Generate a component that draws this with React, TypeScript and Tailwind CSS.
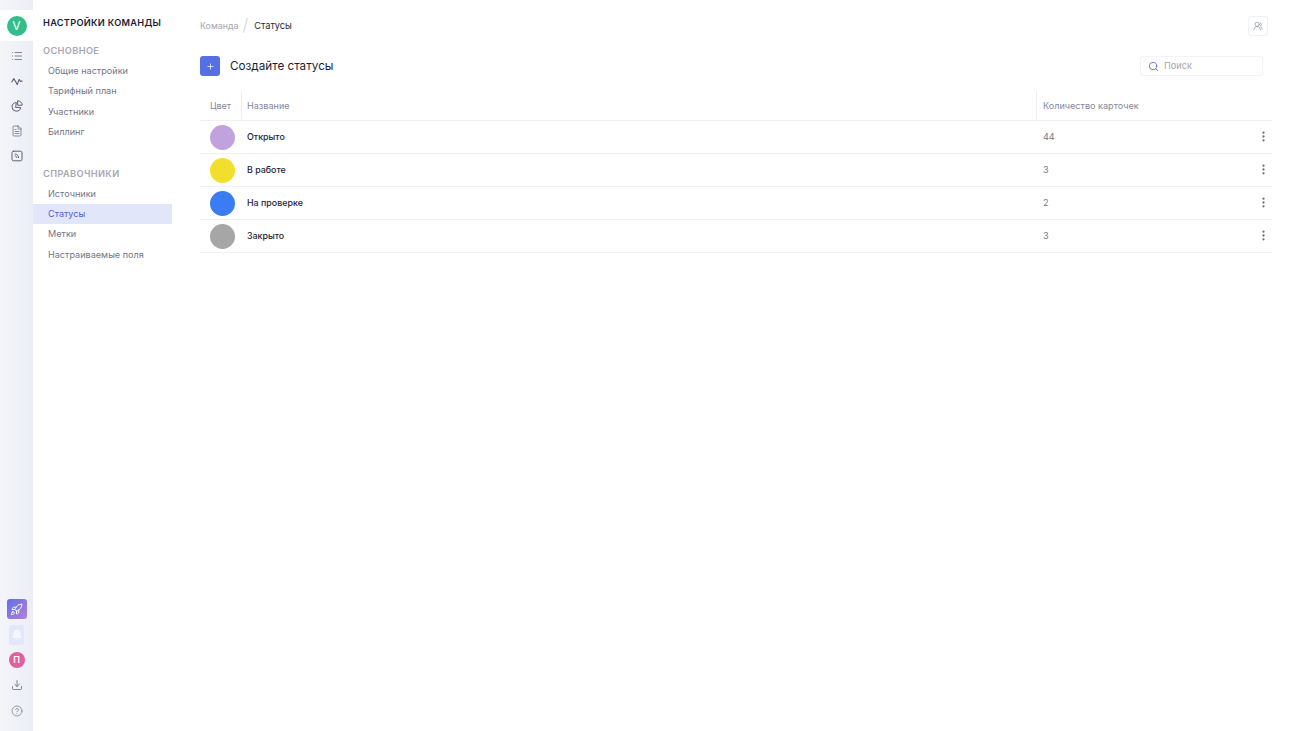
import { Plus, Search, MoreVertical, List, Rocket, Bell, Download, HelpCircle, FileText, UsersRound } from 'lucide-react'

const font = { fontFamily: 'Inter, "Noto Sans", sans-serif' }

const mainLinks = ['Общие настройки', 'Тарифный план', 'Участники', 'Биллинг']
const refLinks = ['Источники', 'Статусы', 'Метки', 'Настраиваемые поля']

const statuses = [
  { name: 'Открыто', color: 'bg-[#c0a3dc]', count: 44 },
  { name: 'В работе', color: 'bg-[#f2df2d]', count: 3 },
  { name: 'На проверке', color: 'bg-[#3b7cf2]', count: 2 },
  { name: 'Закрыто', color: 'bg-[#a6a6a6]', count: 3 },
]

function WaveIcon() {
  return (
    <svg width="12" height="12" viewBox="0 0 12 12" fill="none" stroke="currentColor" strokeWidth="1.1" strokeLinecap="round" strokeLinejoin="round">
      <path d="M0.8 7 L2.8 3.6 L5 7.2 L6.2 9.6 L8.2 4.4 L9.4 6.4 L11.2 6" />
    </svg>
  )
}

function PieIcon() {
  return (
    <svg width="12" height="12" viewBox="0 0 12 12" fill="none" stroke="currentColor" strokeWidth="1" strokeLinecap="round" strokeLinejoin="round">
      <path d="M5 2.6 A4.3 4.3 0 1 0 9.6 7.4 H5 Z" />
      <path d="M7 0.8 A4.2 4.2 0 0 1 11.2 5.2 H7 Z" />
    </svg>
  )
}

function BoxIcon() {
  return (
    <svg width="12" height="12" viewBox="0 0 12 12" fill="none" stroke="currentColor" strokeWidth="1" strokeLinecap="round" strokeLinejoin="round">
      <rect x="1" y="1.2" width="10" height="9.6" rx="1.6" />
      <path d="M4.2 4 C6 4 7.6 5.6 7.6 7.6" />
      <path d="M4.2 6 C5.2 6 5.8 6.8 5.8 7.6" />
    </svg>
  )
}

function Rail() {
  return (
    <div className="w-[33px] h-[731px] shrink-0 flex flex-col items-center bg-gradient-to-r from-[#f4f5f9] to-[#eceef6]">
      <div className="mt-[10px] w-full h-[31px] bg-white flex items-center justify-center">
        <div className="w-5 h-5 rounded-full bg-[#33bd8b] text-white text-[12px] flex items-center justify-center">V</div>
      </div>
      <div className="mt-[9px] flex flex-col items-center gap-[13px] text-[#5d6175]">
        <List size={12} strokeWidth={1.5} />
        <WaveIcon />
        <PieIcon />
        <FileText size={12} strokeWidth={1.4} />
        <BoxIcon />
      </div>
      <div className="mt-auto mb-[14px] flex flex-col items-center text-[#5d6175]">
        <div className="w-5 h-5 rounded-[3px] bg-gradient-to-br from-[#5d6fe8] to-[#b47fd8] flex items-center justify-center text-white">
          <Rocket size={13} strokeWidth={1.8} />
        </div>
        <div className="mt-[6px] w-[15px] h-5 rounded-[2px] bg-[#e3e7fa] flex items-center justify-center text-[#f4f5fd]">
          <Bell size={12} fill="currentColor" />
        </div>
        <div className="mt-[7px] w-4 h-4 rounded-full bg-[#e0609f] text-white text-[9px] font-semibold flex items-center justify-center">П</div>
        <Download className="mt-[11px]" size={12} strokeWidth={1.5} />
        <HelpCircle className="mt-[14px]" size={12} strokeWidth={1.2} />
      </div>
    </div>
  )
}

function NavGroup({ title, links }: { title: string; links: string[] }) {
  return (
    <div>
      <div className="pl-[10px] h-[14px] leading-[14px] text-[9.2px] font-semibold tracking-[0.38px] text-[#a5a7b3]">{title}</div>
      <div className="mt-[3px]">
        {links.map((l) => (
          <div
            key={l}
            className={`h-[20.4px] leading-[20.4px] pl-[15px] text-[9.1px] ${l === 'Статусы' ? 'bg-[#e2e6f9] text-[#4f63d2]' : 'text-[#73768a]'}`}
          >
            {l}
          </div>
        ))}
      </div>
    </div>
  )
}

function Sidebar() {
  return (
    <div className="w-[139px] shrink-0 pt-[16px]">
      <div className="pl-[10px] h-[14px] leading-[14px] text-[9.2px] font-semibold tracking-[0.3px] text-[#1b1e33]">НАСТРОЙКИ КОМАНДЫ</div>
      <div className="mt-[14px]">
        <NavGroup title="ОСНОВНОЕ" links={mainLinks} />
      </div>
      <div className="mt-[24px]">
        <NavGroup title="СПРАВОЧНИКИ" links={refLinks} />
      </div>
    </div>
  )
}

export default function App() {
  return (
    <div className="flex w-[1300px] h-[731px] overflow-hidden bg-white" style={font}>
      <Rail />
      <Sidebar />
      <div className="flex-1 pl-[28px] pr-[28px]">
        <div className="h-[20px] mt-[16px] flex items-center justify-between pr-[4px]">
          <div className="flex items-center text-[8.9px] -mt-[1px]">
            <span className="text-[#a5a7b3]">Команда</span>
            <span className="mx-[4px] text-[#c4c6cf] text-[17px] font-extralight leading-none">/</span>
            <span className="ml-[2px] text-[9.2px] text-[#26293d]">Статусы</span>
          </div>
          <div className="w-5 h-5 rounded-[3px] border border-[#f0f1f5] flex items-center justify-center text-[#777a8c]">
            <UsersRound size={10} strokeWidth={1.4} />
          </div>
        </div>

        <div className="mt-[20px] h-5 flex items-center justify-between pr-[9px]">
          <div className="flex items-center">
            <div className="w-5 h-5 rounded-[3px] bg-[#5470e4] flex items-center justify-center text-white">
              <Plus size={9} strokeWidth={2} />
            </div>
            <span className="ml-[10px] mt-[1px] text-[11.7px] text-[#1b1e33]">Создайте статусы</span>
          </div>
          <div className="w-[123px] h-5 rounded-[3px] border border-[#f2f3f8] flex items-center pl-[7px] gap-[5px] text-[9.2px] text-[#a5a7b3]">
            <Search size={11} strokeWidth={2} className="text-[#6272d8]" />
            <span>Поиск</span>
          </div>
        </div>

        <div className="mt-[15px]">
          <div className="flex h-[30px] items-stretch border-b border-[#eff0f3] text-[9.1px] text-[#85889a]">
            <div className="w-[42px] flex items-center justify-center border-r border-[#eff0f3]">Цвет</div>
            <div className="flex-1 flex items-center pl-[5px] border-r border-[#eff0f3]">Название</div>
            <div className="w-[235px] flex items-center pl-[6px]">Количество карточек</div>
          </div>
          {statuses.map((s) => (
            <div key={s.name} className="flex h-[33px] items-center border-b border-[#eff0f3] text-[9.1px]">
              <div className="w-[47px] pl-[10px]">
                <div className={`w-[25px] h-[25px] rounded-full ${s.color}`} />
              </div>
              <div className="flex-1 text-[8.9px] font-medium text-[#1b1e33]">{s.name}</div>
              <div className="w-[235px] flex items-center justify-between pl-[6px] text-[#73768a]">
                <span>{s.count}</span>
                <MoreVertical size={13} strokeWidth={2.2} className="text-[#6b6e7f] mr-[2px]" />
              </div>
            </div>
          ))}
        </div>
      </div>
    </div>
  )
}
